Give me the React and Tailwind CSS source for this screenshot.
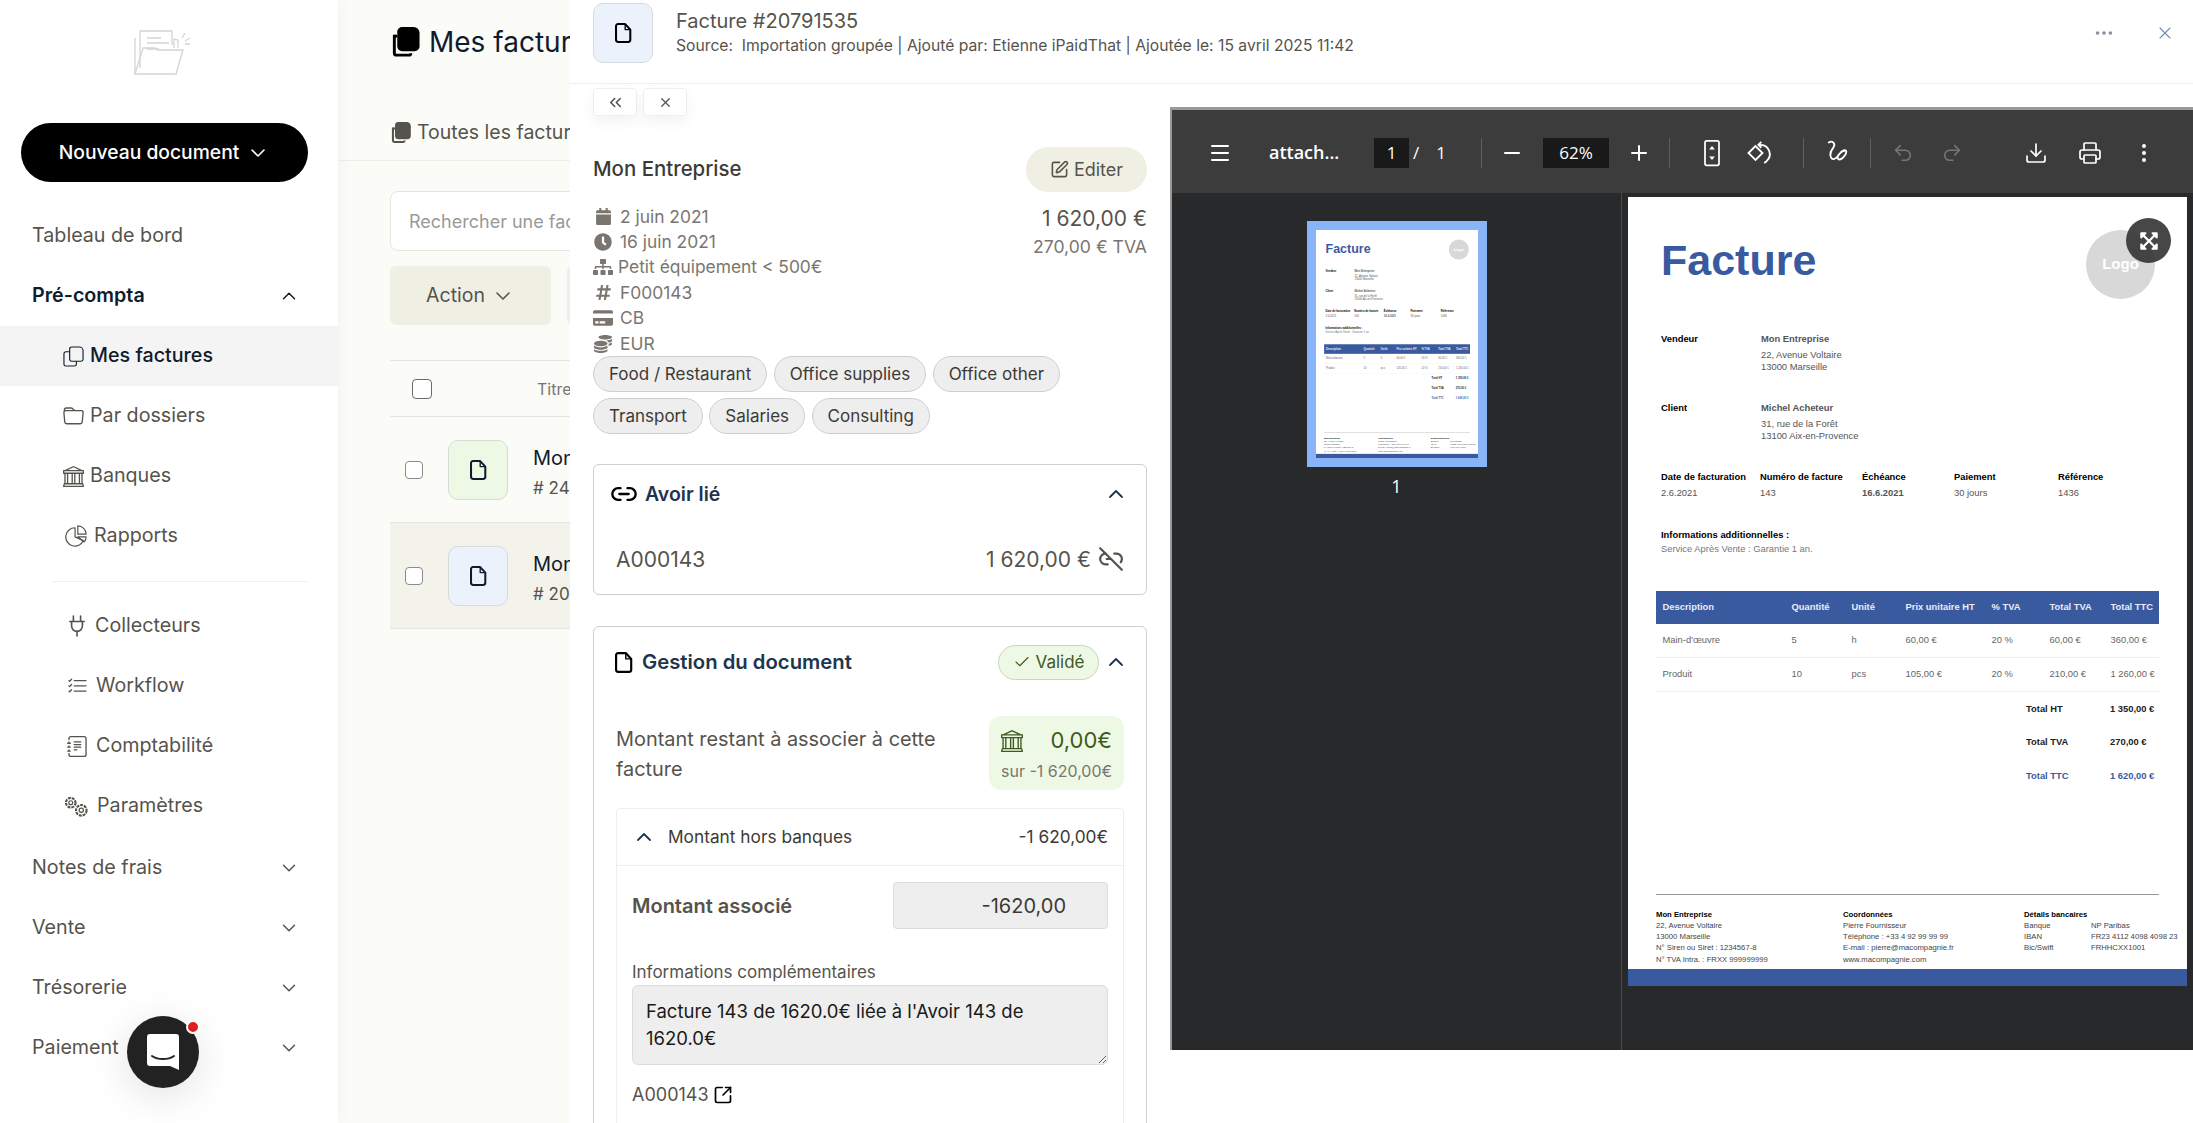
import { ChevronDown, ChevronUp, ChevronsLeft, X, Link2, Link2Off, SquarePen, Check, Menu, Minus, Plus, Download, Printer, Undo2, Redo2, EllipsisVertical, Ellipsis, SquareArrowOutUpRight } from 'lucide-react';
import { BsBank, BsFolder, BsListCheck, BsJournalText } from 'react-icons/bs';
import { FaCalendar, FaClock, FaSitemap, FaHashtag, FaCreditCard, FaCoins, FaExpandArrowsAlt } from 'react-icons/fa';

const FileIcon = ({ className }) => (
  <svg viewBox="0 0 20 24" fill="none" stroke="currentColor" strokeWidth="2.4" strokeLinejoin="round" className={className}>
    <path d="M3.5 1.5h8.5l6 6.5v12a2.5 2.5 0 0 1-2.5 2.5h-12A2.5 2.5 0 0 1 1.2 20V3.8A2.3 2.3 0 0 1 3.5 1.5z" />
    <path d="M12 1.5V8h6" strokeWidth="1.6" />
  </svg>
);

const SheetsFilled = ({ className }) => (
  <svg viewBox="0 0 30 32" className={className} fill="currentColor">
    <path d="M12 0h12a6 6 0 0 1 6 6v14a5 5 0 0 1-5 5H12a5 5 0 0 1-5-5V5a5 5 0 0 1 5-5z" />
    <path d="M4 8v19a2 2 0 0 0 2 2h13a2 2 0 0 0 2-2" fill="none" stroke="currentColor" strokeWidth="3" />
    <path d="M4 9.500h3" stroke="currentColor" strokeWidth="3" />
  </svg>
);

const SheetsLine = ({ className }) => (
  <svg viewBox="0 0 22 22" fill="none" stroke="currentColor" strokeWidth="1.2" className={className}>
    <path d="M9 1h8a4 4 0 0 1 4 4v9a2 2 0 0 1-2 2H9a2 2 0 0 1-2-2V3a2 2 0 0 1 2-2z" />
    <path d="M7 6H3a2 2 0 0 0-2 2v11a2 2 0 0 0 2 2h9a2 2 0 0 0 2-2v-3" />
  </svg>
);

const PieIcon = ({ className }) => (
  <svg viewBox="0 0 24 24" fill="none" stroke="currentColor" strokeWidth="1.3" strokeLinejoin="round" className={className}>
    <path d="M11 3a10 10 0 1 0 9 14l-9-4z" />
    <path d="M14 1a9 9 0 0 1 9 9h-9z" />
    <path d="M14 13h9a9 9 0 0 1-2 5.500z" />
  </svg>
);

const PlugIcon = ({ className }) => (
  <svg viewBox="0 0 20 24" fill="none" stroke="currentColor" strokeWidth="1.8" strokeLinecap="round" className={className}>
    <path d="M6 1v6M14 1v6M2 7h16" />
    <path d="M4 7v5a6 6 0 0 0 12 0V7" />
    <path d="M10 18v5" />
  </svg>
);

const Cogs = ({ className }) => (
  <svg viewBox="0 0 28 24" fill="none" stroke="currentColor" strokeWidth="1.3" className={className}>
    <circle cx="8" cy="8" r="5" strokeDasharray="3 1" strokeWidth="2.2" />
    <circle cx="8" cy="8" r="2" />
    <circle cx="19" cy="16" r="5.500" strokeDasharray="3 1" strokeWidth="2.2" />
    <circle cx="19" cy="16" r="2.200" />
  </svg>
);

const Logo = () => (
  <svg viewBox="0 0 58 46" fill="none" stroke="#d4d4d4" strokeWidth="1.3" className="w-[58px] h-[46px]">
    <path d="M2 9v36h42" />
    <path d="M7 39V2h32v14" />
    <path d="M14 9h14M14 14h22M14 20h12" />
    <path d="M2 45l8-26h12l3 2h25l-7 24" />
    <path d="M41 19v-9l4 1v8" />
    <path d="M49 9l3-5M52 12l5-3M52 15h5" />
  </svg>
);

const NavRow = ({ label, bold, open, chevron = true }) => (
  <div className="h-[60px] pl-[32px] pr-[38px] flex items-center justify-between">
    <span className={bold ? 'font-semibold text-[#0f1c2e]' : 'text-[#56534c]'}>{label}</span>
    {chevron && (open ? <ChevronUp size={22} strokeWidth={1.6} className="text-[#0f1c2e]" /> : <ChevronDown size={22} strokeWidth={1.6} className="text-[#56534c]" />)}
  </div>
);

const SubRow = ({ icon, label, pad, gap, active }) => (
  <div className={`h-[60px] flex items-center ${pad} ${gap} ${active ? 'bg-[#f4f4f4] text-[#0f1c2e] font-medium' : 'text-[#56534c]'}`}>
    {icon}
    <span>{label}</span>
  </div>
);

const Sidebar = () => (
  <aside className="w-[338px] shrink-0 h-full bg-white z-10 shadow-[3px_0_14px_rgba(0,0,0,0.03)] text-[19.700px]">
    <div className="h-[123px] pt-[29px] pl-[133px]">
      <Logo />
    </div>
    <div className="ml-[21px] mr-[30px] h-[59px] rounded-full bg-black text-white flex items-center justify-center gap-[7px] text-[19.300px] font-medium">
      Nouveau document <ChevronDown size={24} strokeWidth={1.6} />
    </div>
    <nav className="mt-[24px]">
      <NavRow label="Tableau de bord" chevron={false} />
      <NavRow label="Pré-compta" bold open />
      <SubRow active pad="pl-[63px]" gap="gap-[6px]" icon={<SheetsLine className="w-[21px] h-[21px]" />} label="Mes factures" />
      <SubRow pad="pl-[63px]" gap="gap-[6px]" icon={<BsFolder size={21} />} label="Par dossiers" />
      <SubRow pad="pl-[63px]" gap="gap-[6px]" icon={<BsBank size={21} />} label="Banques" />
      <SubRow pad="pl-[65px]" gap="gap-[7px]" icon={<PieIcon className="w-[22px] h-[22px]" />} label="Rapports" />
      <div className="mt-[15px] mb-[14px] ml-[52px] mr-[31px] border-t border-[#eeeeee]" />
      <SubRow pad="pl-[68px]" gap="gap-[9px]" icon={<PlugIcon className="w-[18px] h-[22px]" />} label="Collecteurs" />
      <SubRow pad="pl-[67px]" gap="gap-[8px]" icon={<BsListCheck size={21} />} label="Workflow" />
      <SubRow pad="pl-[67px]" gap="gap-[8px]" icon={<BsJournalText size={21} />} label="Comptabilité" />
      <SubRow pad="pl-[63px]" gap="gap-[7px]" icon={<Cogs className="w-[27px] h-[23px]" />} label="Paramètres" />
      <div className="mt-[2px]">
        <NavRow label="Notes de frais" />
        <NavRow label="Vente" />
        <NavRow label="Trésorerie" />
        <NavRow label="Paiement" />
      </div>
    </nav>
  </aside>
);

const TableRow = ({ bg, tint, sub }) => (
  <div className={`h-[106px] flex items-center border-b border-[#e6e6e0] ${bg}`}>
    <div className="w-[18px] h-[18px] ml-[15px] rounded-[4px] border border-[#8a8a8a] bg-white" />
    <div className={`ml-[25px] w-[60px] h-[60px] rounded-[10px] border border-[#d6dbd6] flex items-center justify-center ${tint}`}>
      <FileIcon className="w-[17px] h-[22px] text-[#0f1c2e]" />
    </div>
    <div className="ml-[25px] pt-[5px] text-[20px] text-[#0f1c2e]">
      <div>Mon Entreprise</div>
      <div className="text-[17px] text-[#56534c] mt-[3px]">{sub}</div>
    </div>
  </div>
);

const MainList = () => (
  <main className="w-[232px] shrink-0 h-full bg-[#fbfbf8] overflow-hidden">
    <div className="w-[900px]">
      <div className="h-[161px] border-b border-[#efefe8] pl-[52px]">
        <div className="h-[84px] flex items-center gap-[9px] text-[28px] text-[#0f1c2e]">
          <SheetsFilled className="w-[30px] h-[31px] text-black" />
          Mes factures
        </div>
        <div className="h-[50px] mt-[24px] flex items-center gap-[6px] text-[19.500px] text-[#56534c]">
          <SheetsFilled className="w-[21px] h-[22px]" />
          Toutes les factures
        </div>
      </div>
      <div className="pl-[52px]">
        <div className="mt-[30px] h-[60px] w-[700px] rounded-[8px] border border-[#e6e6e0] bg-white flex items-center pl-[18px] text-[18px] text-[#9a9a96]">
          Rechercher une facture
        </div>
        <div className="mt-[15px] flex gap-[16px]">
          <div className="w-[161px] h-[59px] rounded-[6px] bg-[#efefe4] text-[#56534c] text-[19.500px] flex items-center justify-center gap-[6px]">
            Action <ChevronDown size={24} strokeWidth={1.6} />
          </div>
          <div className="w-[161px] h-[59px] rounded-[6px] bg-[#efefe4]" />
        </div>
        <div className="mt-[35px] h-[57px] flex items-center border-y border-[#e6e6e0]">
          <div className="w-[20px] h-[20px] ml-[22px] rounded-[4px] border border-[#6b6b6b] bg-white" />
          <span className="ml-[105px] text-[16px] text-[#7a766f]">Titre</span>
        </div>
        <TableRow bg="" tint="bg-[#eef9e5]" sub="# 2420143" />
        <TableRow bg="bg-[#f3f3ec]" tint="bg-[#ebf2fb]" sub="# 20791535" />
      </div>
    </div>
  </main>
);

const MetaLine = ({ icon, children, gap = 'gap-[7px]' }) => (
  <div className={`h-[25.400px] flex items-center ${gap}`}>
    <span className="w-[20px] flex justify-center shrink-0">{icon}</span>
    <span>{children}</span>
  </div>
);

const Tag = ({ children }) => (
  <span className="h-[36px] px-[15px] rounded-full bg-[#eeeeee] border border-[#cfcfcf] flex items-center text-[17px] text-[#3d3a35]">{children}</span>
);

const DetailColumn = () => (
  <div className="w-[600px] shrink-0 h-[1039px] px-[23px] overflow-hidden">
    <div className="mt-[4px] flex gap-[6px]">
      <div className="w-[44px] h-[28px] rounded-[4px] border border-[#efefe8] bg-white shadow-[0_6px_14px_rgba(0,0,0,0.05)] flex items-center justify-center text-[#56534c]"><ChevronsLeft size={19} /></div>
      <div className="w-[44px] h-[28px] rounded-[4px] border border-[#efefe8] bg-white shadow-[0_6px_14px_rgba(0,0,0,0.05)] flex items-center justify-center text-[#56534c]"><X size={15} /></div>
    </div>
    <div className="mt-[31px] h-[45px] flex items-center justify-between">
      <span className="text-[20.400px] font-medium text-[#3d3a35]">Mon Entreprise</span>
      <div className="w-[121px] h-[45px] rounded-full bg-[#efefe4] flex items-center justify-center gap-[5px] text-[18px] text-[#56534c]">
        <SquarePen size={19} /> Editer
      </div>
    </div>
    <div className="mt-[12px] flex justify-between text-[17.400px] text-[#7a766f]">
      <div>
        <MetaLine icon={<FaCalendar size={17} />}>2 juin 2021</MetaLine>
        <MetaLine icon={<FaClock size={18} />}>16 juin 2021</MetaLine>
        <MetaLine icon={<FaSitemap size={20} />} gap="gap-[5px]">Petit équipement &lt; 500€</MetaLine>
        <MetaLine icon={<FaHashtag size={17} />}>F000143</MetaLine>
        <MetaLine icon={<FaCreditCard size={20} />}>CB</MetaLine>
        <MetaLine icon={<FaCoins size={18} />}>EUR</MetaLine>
      </div>
      <div className="text-right">
        <div className="text-[21px] leading-[30px] text-[#56534c]">1 620,00 €</div>
        <div className="text-[17.600px] leading-[26px]">270,00 € TVA</div>
      </div>
    </div>
    <div className="flex flex-col gap-[6px]">
      <div className="flex gap-[6.500px]">
        <Tag>Food / Restaurant</Tag>
        <Tag>Office supplies</Tag>
        <Tag>Office other</Tag>
      </div>
      <div className="flex gap-[6.500px]">
        <Tag>Transport</Tag>
        <Tag>Salaries</Tag>
        <Tag>Consulting</Tag>
      </div>
    </div>

    <section className="mt-[30px] h-[131px] rounded-[6px] border border-[#cfcfcf]">
      <div className="h-[58px] pl-[16px] pr-[18px] flex items-center justify-between">
        <div className="flex items-center gap-[7px] text-[19.500px] font-semibold text-[#1e3550]">
          <Link2 size={28} className="text-black" /> Avoir lié
        </div>
        <ChevronUp size={24} strokeWidth={1.8} className="text-[#1e3550]" />
      </div>
      <div className="h-[72px] pl-[22px] pr-[22px] flex items-center justify-between text-[21px] text-[#56534c]">
        <span>A000143</span>
        <div className="flex items-center gap-[7px]">1 620,00 € <Link2Off size={26} /></div>
      </div>
    </section>

    <section className="mt-[31px] h-[600px] rounded-[6px] border border-[#cfcfcf]">
      <div className="h-[70px] pl-[21px] pr-[18px] flex items-center justify-between">
        <div className="flex items-center gap-[9px] text-[20.300px] font-semibold text-[#1e3550]">
          <FileIcon className="w-[18px] h-[23px] text-black" /> Gestion du document
        </div>
        <div className="flex items-center gap-[5px]">
          <div className="w-[101px] h-[35px] rounded-full bg-[#eef9e5] border border-[#c9d6bf] flex items-center justify-center gap-[5px] text-[17px] text-[#3f5a1f]">
            <Check size={18} strokeWidth={1.5} /> Validé
          </div>
          <ChevronUp size={24} strokeWidth={1.8} className="text-[#1e3550]" />
        </div>
      </div>
      <div className="mt-[19px] mx-[22px] flex items-start justify-between">
        <div className="w-[340px] mt-[8px] text-[19.900px] leading-[30px] text-[#56534c]">Montant restant à associer à cette facture</div>
        <div className="w-[135px] h-[74px] rounded-[12px] bg-[#eef9e5] px-[12px] pt-[8px]">
          <div className="flex items-center justify-between text-[22px] text-[#3f5a1f]">
            <BsBank size={22} /> <span>0,00€</span>
          </div>
          <div className="mt-[2px] text-[16px] text-right text-[#7a766f] whitespace-nowrap">sur -1 620,00€</div>
        </div>
      </div>
      <div className="mt-[18px] mx-[22px] h-[400px] rounded-[4px] border border-[#efefe8]">
        <div className="h-[57px] border-b border-[#efefe8] pl-[15px] pr-[15px] flex items-center text-[17.300px] text-[#3d3a35]">
          <ChevronUp size={24} strokeWidth={1.8} className="text-[#1e3550]" />
          <span className="ml-[12px]">Montant hors banques</span>
          <span className="ml-auto">-1 620,00€</span>
        </div>
        <div className="px-[15px]">
          <div className="mt-[16px] flex items-center justify-between">
            <span className="text-[20px] font-semibold text-[#56534c]">Montant associé</span>
            <div className="w-[215px] h-[47px] rounded-[4px] bg-[#eeeeee] border border-[#dcdcdc] flex items-center justify-end pr-[41px] text-[20px] text-[#3d3a35]">-1620,00</div>
          </div>
          <div className="mt-[31px] h-[25px] text-[17px] leading-[25px] text-[#56534c]">Informations complémentaires</div>
          <textarea
            readOnly
            value="Facture 143 de 1620.0€ liée à l'Avoir 143 de 1620.0€"
            className="block w-full h-[80px] rounded-[6px] bg-[#eeeeee] border border-[#dcdcdc] pl-[13px] pr-[60px] py-[12px] text-[18.500px] leading-[27px] text-[#1a1a1a] outline-none"
          />
          <div className="mt-[16px] flex items-center gap-[4px] text-[18px] text-[#56534c]">
            A000143 <SquareArrowOutUpRight size={20} className="text-black" />
          </div>
        </div>
      </div>
    </section>
  </div>
);

const Pair = ({ label, name, lines, mt }) => (
  <div className={`${mt} flex pl-[33px]`}>
    <div className="w-[100px] font-bold text-black leading-[12px]">{label}</div>
    <div className="text-[#555555]">
      <div className="font-bold leading-[12px]">{name}</div>
      <div className="mt-[4px] leading-[11.500px]">{lines[0]}<br />{lines[1]}</div>
    </div>
  </div>
);

const tableCols = 'grid grid-cols-[129px_60px_54px_86px_58px_61px_1fr] pl-[6.500px] items-center';
const invoiceRows = [
  ['Main-d\'œuvre', '5', 'h', '60,00 €', '20 %', '60,00 €', '360,00 €'],
  ['Produit', '10', 'pcs', '105,00 €', '20 %', '210,00 €', '1 260,00 €'],
];

const Invoice = () => (
  <div className="w-[559px] h-[789px] bg-white flex flex-col text-[9.400px] [font-family:'Liberation_Sans',Arial,sans-serif]">
    <div className="pt-[33px] pl-[33px] pr-[32px] flex justify-between items-start">
      <div className="mt-[8px] text-[43px] leading-[44px] font-bold text-[#3a5aa0]">Facture</div>
      <div className="w-[69px] h-[69px] rounded-full bg-[#d8d8d8] flex items-center justify-center text-white font-bold text-[15px]">Logo</div>
    </div>
    <Pair mt="mt-[34px]" label="Vendeur" name="Mon Entreprise" lines={['22, Avenue Voltaire', '13000 Marseille']} />
    <Pair mt="mt-[30px]" label="Client" name="Michel Acheteur" lines={['31, rue de la Forêt', '13100 Aix-en-Provence']} />
    <div className="mt-[30px] ml-[33px] grid grid-cols-[99px_102px_92px_104px_1fr] leading-[12px]">
      {['Date de facturation', 'Numéro de facture', 'Échéance', 'Paiement', 'Référence'].map((h) => (
        <div key={h} className="font-bold text-black">{h}</div>
      ))}
      {['2.6.2021', '143', '16.6.2021', '30 jours', '1436'].map((v) => (
        <div key={v} className={`mt-[4px] text-[#555555] ${v === '16.6.2021' ? 'font-bold' : ''}`}>{v}</div>
      ))}
    </div>
    <div className="mt-[30px] ml-[33px] leading-[12px]">
      <div className="font-bold text-black">Informations additionnelles :</div>
      <div className="mt-[2px] text-[#777777]">Service Après Vente : Garantie 1 an.</div>
    </div>
    <div className="mt-[36px] ml-[28px] mr-[28px]">
      <div className={`${tableCols} h-[33px] bg-[#3a5aa0] text-[#e8ecf5] font-bold`}>
        {['Description', 'Quantité', 'Unité', 'Prix unitaire HT', '% TVA', 'Total TVA', 'Total TTC'].map((h) => (
          <div key={h}>{h}</div>
        ))}
      </div>
      {invoiceRows.map((row) => (
        <div key={row[0]} className={`${tableCols} h-[34px] border-b border-[#eeeeee] text-[#666666]`}>
          {row.map((c, i) => <div key={i}>{c}</div>)}
        </div>
      ))}
      {[['Total HT', '1 350,00 €'], ['Total TVA', '270,00 €'], ['Total TTC', '1 620,00 €']].map(([l, v]) => (
        <div key={l} className={`h-[33.500px] ml-[370px] flex items-center font-bold ${l === 'Total TTC' ? 'text-[#3a5aa0]' : 'text-[#222222]'}`}>
          <div className="w-[84px]">{l}</div>
          <div>{v}</div>
        </div>
      ))}
    </div>
    <div className="mt-auto ml-[28px] mr-[28px] border-t border-[#999999] pt-[14px] pb-[4px] grid grid-cols-[187px_181px_1fr] text-[7.700px] leading-[11.300px] text-[#444444]">
      <div>
        <div className="font-bold text-black">Mon Entreprise</div>
        <div>22, Avenue Voltaire</div>
        <div>13000 Marseille</div>
        <div>N° Siren ou Siret : 1234567-8</div>
        <div>N° TVA Intra. : FRXX 999999999</div>
      </div>
      <div>
        <div className="font-bold text-black">Coordonnées</div>
        <div>Pierre Fournisseur</div>
        <div>Téléphone : +33 4 92 99 99 99</div>
        <div>E-mail : pierre@macompagnie.fr</div>
        <div>www.macompagnie.com</div>
      </div>
      <div>
        <div className="font-bold text-black">Détails bancaires</div>
        <div className="grid grid-cols-[67px_1fr] whitespace-nowrap">
          <div>Banque</div><div>NP Paribas</div>
          <div>IBAN</div><div>FR23 4112 4098 4098 23</div>
          <div>Bic/Swift</div><div>FRHHCXX1001</div>
        </div>
      </div>
    </div>
    <div className="h-[17px] bg-[#3a5aa0]" />
  </div>
);

const Sep = ({ ml }) => <div className={`${ml} w-px h-[30px] bg-[#5f5f5f]`} />;

const PdfViewer = () => (
  <div className="flex-1 h-[943px] mt-[23px] border-t-[3px] border-l-[2px] border-[#999999] bg-[#28292b] flex flex-col [font-family:'Open_Sans',sans-serif]">
    <div className="h-[83px] pt-[2px] bg-[#3c3c3c] flex items-center text-white text-[17px] shrink-0">
      <Menu size={24} className="ml-[36px]" />
      <span className="ml-[37px] w-[75px] font-semibold text-[18px]">attach...</span>
      <div className="ml-[30px] w-[35px] h-[30px] bg-[#191919] flex items-center justify-center">1</div>
      <span className="w-[14px] text-center">/</span>
      <span className="ml-[12px] w-[12px] text-center">1</span>
      <Sep ml="ml-[34px]" />
      <Minus size={24} className="ml-[18px]" />
      <div className="ml-[19px] w-[66px] h-[30px] bg-[#191919] flex items-center justify-center">62%</div>
      <Plus size={24} className="ml-[18px]" />
      <Sep ml="ml-[18px]" />
      <svg viewBox="0 0 24 24" fill="none" stroke="currentColor" strokeWidth="1.5" className="ml-[28px] w-[28px] h-[28px]">
        <rect x="6" y="1.500" width="12" height="21" rx="1.500" />
        <path d="M12 6l-2.500 3h5zM12 18l-2.500-3h5z" fill="currentColor" stroke="none" />
      </svg>
      <svg viewBox="0 0 24 24" fill="none" stroke="currentColor" strokeWidth="1.6" className="ml-[19px] w-[28px] h-[28px]">
        <path d="M9 6l-6 6 6 6 6-6z" />
        <path d="M14 2.500l-2.500 2.500 2.500 2.500M11.500 5h2a8 8 0 0 1 5 14l-2 1.500" />
      </svg>
      <Sep ml="ml-[30px]" />
      <svg viewBox="0 0 24 24" fill="none" stroke="currentColor" strokeWidth="1.6" strokeLinecap="round" className="ml-[19px] w-[28px] h-[28px]">
        <path d="M5 3c3-2 6 1 4 4s-4 6-2 9 5 0 7-3 6-5 6-2-5 8-7 6 3-7 6-7" />
      </svg>
      <Sep ml="ml-[19px]" />
      <Undo2 size={22} strokeWidth={1.7} className="ml-[21px] text-[#777777]" />
      <Redo2 size={22} strokeWidth={1.7} className="ml-[27px] text-[#777777]" />
      <Download size={24} strokeWidth={1.7} className="ml-[61px]" />
      <Printer size={24} strokeWidth={1.7} className="ml-[30px]" />
      <EllipsisVertical size={24} className="ml-[30px]" />
    </div>
    <div className="flex-1 flex min-h-0">
      <div className="w-[450px] pt-[28px] flex flex-col items-center border-r border-[#4a4a4a]">
        <div className="border-[9px] border-[#8ab4f8]">
          <div className="w-[162px] h-[228px] overflow-hidden">
            <div className="origin-top-left scale-[0.29]">
              <Invoice />
            </div>
          </div>
        </div>
        <div className="mt-[6px] text-white text-[18px]">1</div>
      </div>
      <div className="relative flex-1 pl-[6px] pt-[4px]">
        <Invoice />
        <div className="absolute left-[504px] top-[25px] w-[45px] h-[45px] rounded-full bg-[#333333]/90 flex items-center justify-center text-white">
          <FaExpandArrowsAlt size={20} />
        </div>
      </div>
    </div>
  </div>
);

const DetailPanel = () => (
  <section className="flex-1 h-full bg-white overflow-hidden z-20">
    <header className="h-[84px] border-b border-[#efefe8] pl-[23px] flex items-center">
      <div className="w-[60px] h-[60px] -mt-[17px] rounded-[10px] border border-[#d6dbe0] bg-[#ebf2fb] flex items-center justify-center">
        <FileIcon className="w-[17px] h-[22px] text-black" />
      </div>
      <div className="ml-[23px] -mt-[19px]">
        <div className="text-[20px] leading-[28px] text-[#56534c]">Facture #20791535</div>
        <div className="text-[15.700px] leading-[22px] text-[#56534c] whitespace-pre">Source:  Importation groupée | Ajouté par: Etienne iPaidThat | Ajoutée le: 15 avril 2025 11:42</div>
      </div>
      <Ellipsis size={22} className="ml-auto -mt-[17px] text-[#8a8f98]" />
      <X size={20} strokeWidth={1.3} className="ml-[40px] mr-[18px] -mt-[17px] text-[#6d8fb0]" />
    </header>
    <div className="flex">
      <DetailColumn />
      <PdfViewer />
    </div>
  </section>
);

const ChatBubble = () => (
  <div className="absolute left-[127px] top-[1016px] z-30 w-[72px] h-[72px] rounded-full bg-[#222222] flex items-center justify-center shadow-[0_8px_40px_rgba(0,0,0,0.12)]">
    <svg viewBox="0 0 32 36" className="w-[32px] h-[36px]">
      <path d="M3 0h26a3 3 0 0 1 3 3v33l-9-4H3a3 3 0 0 1-3-3V3a3 3 0 0 1 3-3z" fill="white" />
      <path d="M5 22c6 4 16 4 22 0" fill="none" stroke="#222222" strokeWidth="2" strokeLinecap="round" />
    </svg>
    <span className="absolute right-[-1px] top-[4px] w-[14px] h-[14px] rounded-full bg-[#e02020] border-2 border-white" />
  </div>
);

const App = () => (
  <div className="relative w-[2193px] h-[1123px] flex overflow-hidden bg-white [font-family:Inter,sans-serif]">
    <Sidebar />
    <MainList />
    <DetailPanel />
    <ChatBubble />
  </div>
);

export default App;
